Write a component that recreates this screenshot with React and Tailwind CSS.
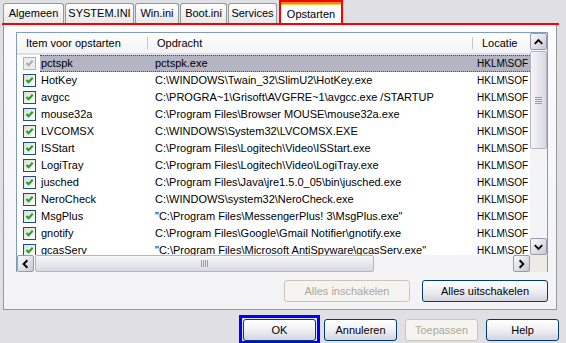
import React from 'react';

const rows = [
  { name: 'pctspk', cmd: 'pctspk.exe', selected: true, disabled: true },
  { name: 'HotKey', cmd: 'C:\\WINDOWS\\Twain_32\\SlimU2\\HotKey.exe' },
  { name: 'avgcc', cmd: 'C:\\PROGRA~1\\Grisoft\\AVGFRE~1\\avgcc.exe /STARTUP' },
  { name: 'mouse32a', cmd: 'C:\\Program Files\\Browser MOUSE\\mouse32a.exe' },
  { name: 'LVCOMSX', cmd: 'C:\\WINDOWS\\System32\\LVCOMSX.EXE' },
  { name: 'ISStart', cmd: 'C:\\Program Files\\Logitech\\Video\\ISStart.exe' },
  { name: 'LogiTray', cmd: 'C:\\Program Files\\Logitech\\Video\\LogiTray.exe' },
  { name: 'jusched', cmd: 'C:\\Program Files\\Java\\jre1.5.0_05\\bin\\jusched.exe' },
  { name: 'NeroCheck', cmd: 'C:\\WINDOWS\\system32\\NeroCheck.exe' },
  { name: 'MsgPlus', cmd: '"C:\\Program Files\\MessengerPlus! 3\\MsgPlus.exe"' },
  { name: 'gnotify', cmd: 'C:\\Program Files\\Google\\Gmail Notifier\\gnotify.exe' },
  { name: 'gcasServ', cmd: '"C:\\Program Files\\Microsoft AntiSpyware\\gcasServ.exe"' },
];

const tabs = [
  { label: 'Algemeen', w: 'w-[61px]' },
  { label: 'SYSTEM.INI', w: 'w-[69px]' },
  { label: 'Win.ini', w: 'w-[44px]' },
  { label: 'Boot.ini', w: 'w-[47px]' },
  { label: 'Services', w: 'w-[49px]' },
];

const Check = ({ disabled }) => (
  <div
    className={`w-[13px] h-[13px] border flex items-center justify-center ${
      disabled
        ? 'border-[#b0b0bc] bg-[#ececef]'
        : 'border-[#1c5180] bg-gradient-to-br from-[#dcdcd7] to-white'
    }`}
  >
    <svg width="9" height="9" viewBox="0 0 9 9">
      <path
        d="M1.5 4 L3.5 6.2 L7.7 1.8"
        fill="none"
        stroke={disabled ? '#a8b0a8' : '#21a121'}
        strokeWidth="2.1"
      />
    </svg>
  </div>
);

const Arrow = ({ dir }) => {
  const d = {
    up: 'M4 10 L8 6 L12 10',
    down: 'M4 6 L8 10 L12 6',
    left: 'M10 4 L6 8 L10 12',
    right: 'M6 4 L10 8 L6 12',
  }[dir];
  return (
    <div className="w-[17px] h-[17px] shrink-0 rounded-[2px] border border-[#9a9aac] bg-gradient-to-br from-[#fafafc] to-[#c9c9d6] flex items-center justify-center">
      <svg width="16" height="16" viewBox="0 0 16 16">
        <path d={d} fill="none" stroke="#000" strokeWidth="2" />
      </svg>
    </div>
  );
};

const Btn = ({ children, disabled, className = '' }) => (
  <div
    className={`flex items-center justify-center h-[22px] rounded-[3px] border text-[11px] ${
      disabled
        ? 'border-[#c9c7ba] text-[#aca899] bg-[#f5f4f1]'
        : 'border-[#003c74] text-black bg-gradient-to-b from-white via-[#f0f0f4] to-[#d4d3e0]'
    } ${className}`}
  >
    {children}
  </div>
);

export default function App() {
  return (
    <div className="w-[566px] h-[343px] overflow-hidden bg-[#e0dfe3] font-['Liberation_Sans',Arial,sans-serif] text-[11px] text-black">
      {/* tabs */}
      <div className="flex items-end h-[23px] pl-[3px]">
        {tabs.map((t) => (
          <div
            key={t.label}
            className={`${t.w} h-[20px] mr-px shrink-0 flex items-center justify-center border border-b-0 border-[#919b9c] rounded-t-[3px] bg-gradient-to-b from-white to-[#e8e8ec]`}
          >
            {t.label}
          </div>
        ))}
        <div className="ml-px w-[64px] h-[23px] border-2 border-b-0 border-[#ff0000] flex">
          <div className="flex-1 flex flex-col bg-[#fcfcfe]">
            <div className="h-[2px] bg-[#e68b2c]" />
            <div className="h-px bg-[#ffc73c]" />
            <div className="flex-1 flex items-center justify-center">Opstarten</div>
          </div>
        </div>
      </div>
      <div className="ml-[2px] w-[557px] h-[2px] bg-[#ff0000]" />

      {/* page */}
      <div className="ml-[3px] w-[554px] h-[285px] border-x border-b border-[#919b9c] bg-gradient-to-b from-[#fcfcfe] to-[#f3f3f5] pl-[12px] pt-[7px]">
        <div className="w-[532px] h-[240px] border border-[#7f9db9] bg-white flex flex-col">
          <div className="flex h-[222px]">
            <div className="flex-1 flex flex-col overflow-hidden">
              {/* header */}
              <div className="h-[22px] shrink-0 flex items-center bg-gradient-to-b from-white to-[#f3f3f6] border-b-2 border-[#dedee6]">
                <div className="w-[130px] pl-[9px] shrink-0">Item voor opstarten</div>
                <div className="w-px h-[12px] bg-[#c8c8d2]" />
                <div className="w-[324px] pl-[9px] shrink-0">Opdracht</div>
                <div className="w-px h-[12px] bg-[#c8c8d2]" />
                <div className="pl-[9px] whitespace-nowrap">Locatie</div>
              </div>
              {/* rows */}
              {rows.map((r) => (
                <div key={r.name} className="h-[17px] shrink-0 flex items-center">
                  <div className="w-[23px] shrink-0 pl-[6px]">
                    <Check disabled={r.disabled} />
                  </div>
                  <div
                    className={`flex-1 h-full flex items-center whitespace-nowrap overflow-hidden ${
                      r.selected ? 'bg-[#b4b4c3] border-y border-dotted border-[#4a4a58]' : ''
                    }`}
                  >
                    <div className="w-[107px] shrink-0 pl-px">{r.name}</div>
                    <div className="w-[325px] shrink-0 pl-[8px] overflow-hidden">{r.cmd}</div>
                    <div className="pl-[5px] text-[10px]">{'HKLM\\SOF'}</div>
                  </div>
                </div>
              ))}
            </div>
            {/* vertical scrollbar */}
            <div className="w-[17px] shrink-0 flex flex-col bg-[#f4f4f6]">
              <Arrow dir="up" />
              <div className="h-[98px] shrink-0 mt-px rounded-[2px] border border-[#b4b4c6] bg-gradient-to-r from-[#f6f6f8] to-[#d9d9e3] flex flex-col items-center justify-center gap-px">
                <div className="w-[7px] h-px bg-[#9c9cae]" />
                <div className="w-[7px] h-px bg-[#9c9cae]" />
                <div className="w-[7px] h-px bg-[#9c9cae]" />
                <div className="w-[7px] h-px bg-[#9c9cae]" />
              </div>
              <div className="flex-1" />
              <Arrow dir="down" />
            </div>
          </div>
          {/* horizontal scrollbar */}
          <div className="flex h-[17px] bg-[#f4f4f6]">
            <Arrow dir="left" />
            <div className="w-[339px] shrink-0 ml-px rounded-[2px] border border-[#b4b4c6] bg-gradient-to-b from-[#f6f6f8] to-[#d9d9e3] flex items-center justify-center gap-px">
              <div className="w-px h-[7px] bg-[#9c9cae]" />
              <div className="w-px h-[7px] bg-[#9c9cae]" />
              <div className="w-px h-[7px] bg-[#9c9cae]" />
              <div className="w-px h-[7px] bg-[#9c9cae]" />
            </div>
            <div className="flex-1" />
            <Arrow dir="right" />
            <div className="w-[17px] shrink-0 bg-[#ecebe6]" />
          </div>
        </div>

        <div className="mt-[8px] flex justify-end gap-[12px] pr-[8px]">
          <Btn disabled className="w-[126px]">Alles inschakelen</Btn>
          <Btn className="w-[126px]">Alles uitschakelen</Btn>
        </div>
      </div>

      {/* dialog buttons */}
      <div className="mt-[5px] flex items-start pl-[239px]">
        <div className="w-[81px] h-[29px] shrink-0 border-[3px] border-[#0000ff] p-px">
          <Btn className="w-full h-[21px]">OK</Btn>
        </div>
        <div className="mt-[4px] ml-[4px] flex gap-[8px]">
          <Btn className="w-[73px] h-[21px]">Annuleren</Btn>
          <Btn disabled className="w-[73px] h-[21px]">Toepassen</Btn>
          <Btn className="w-[73px] h-[21px]">Help</Btn>
        </div>
      </div>
    </div>
  );
}
